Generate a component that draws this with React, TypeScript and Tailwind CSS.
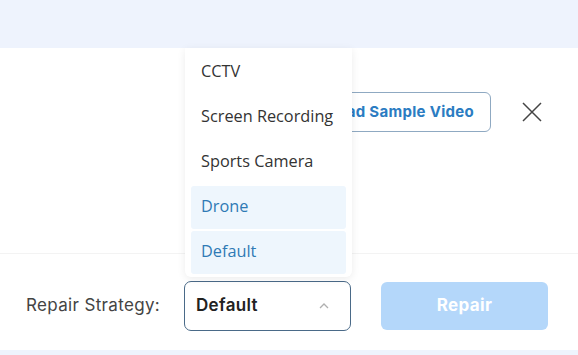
import React from "react";

const OPTIONS = ["CCTV", "Screen Recording", "Sports Camera", "Drone", "Default"];
const HIGHLIGHTED = ["Drone", "Default"];

export default function App() {
  return (
    <div className="relative flex h-[355px] w-[578px] flex-col overflow-hidden bg-white">
      {/* top band */}
      <div className="h-[48px] bg-[#eef3fd]" />

      {/* body */}
      <div className="flex flex-1 items-start justify-end pr-[36px] pt-[44px]">
        <div className="flex items-center gap-[31px]">
          <button
            type="button"
            className="h-[40px] rounded-[6px] border border-[#8fa9c2] px-[16px] text-[15px] font-bold tracking-[0.02em] text-[#2b7cc2]"
            style={{ fontFamily: "Inter, sans-serif" }}
          >
            Load Sample Video
          </button>
          <svg width="20" height="20" viewBox="0 0 20 20" className="text-[#444]">
            <path d="M1 1L19 19M19 1L1 19" stroke="currentColor" strokeWidth="1.5" fill="none" />
          </svg>
        </div>
      </div>

      {/* footer */}
      <div
        className="flex h-[97px] items-center border-t border-[#f3f3f3] pl-[26px] pt-[7px]"
        style={{ fontFamily: "Inter, sans-serif" }}
      >
        <span className="w-[138px] whitespace-nowrap text-[17px] tracking-[0.02em] text-[#444]">
          Repair Strategy:
        </span>
        <div className="ml-[20px] flex h-[50px] w-[167px] items-center justify-between rounded-[7px] border border-[#4a6a88] pl-[11px] pr-[21px]">
          <span className="text-[17px] font-semibold tracking-[0.02em] text-[#222]">Default</span>
          <svg width="10" height="6" viewBox="0 0 10 6">
            <path d="M1 5L5 1L9 5" stroke="#b0b0b0" strokeWidth="1.3" fill="none" />
          </svg>
        </div>
        <button
          type="button"
          className="ml-[30px] h-[48px] w-[167px] rounded-[6px] bg-[#b4d7fa] text-[17px] font-bold tracking-[0.02em] text-white"
        >
          Repair
        </button>
      </div>

      {/* bottom band */}
      <div className="h-[5px] bg-[#eef4fd]" />

      {/* open dropdown menu */}
      <div
        className="absolute left-[185px] top-[48px] flex w-[167px] flex-col gap-[2px] rounded-b-[6px] bg-white px-[6px] pb-[3px] pt-[3px] shadow-[0_2px_8px_rgba(0,0,0,0.08)]"
        style={{ fontFamily: "'Open Sans', sans-serif" }}
      >
        {OPTIONS.map((o) => (
          <div
            key={o}
            className={
              HIGHLIGHTED.includes(o)
                ? "flex h-[43px] items-center rounded-[3px] bg-[#eef6fd] pb-[2px] pl-[10px] text-[16.3px] text-[#2f7ab5]"
                : "flex h-[43px] items-center pb-[2px] pl-[10px] text-[16.3px] text-[#333]"
            }
          >
            {o}
          </div>
        ))}
      </div>
    </div>
  );
}
